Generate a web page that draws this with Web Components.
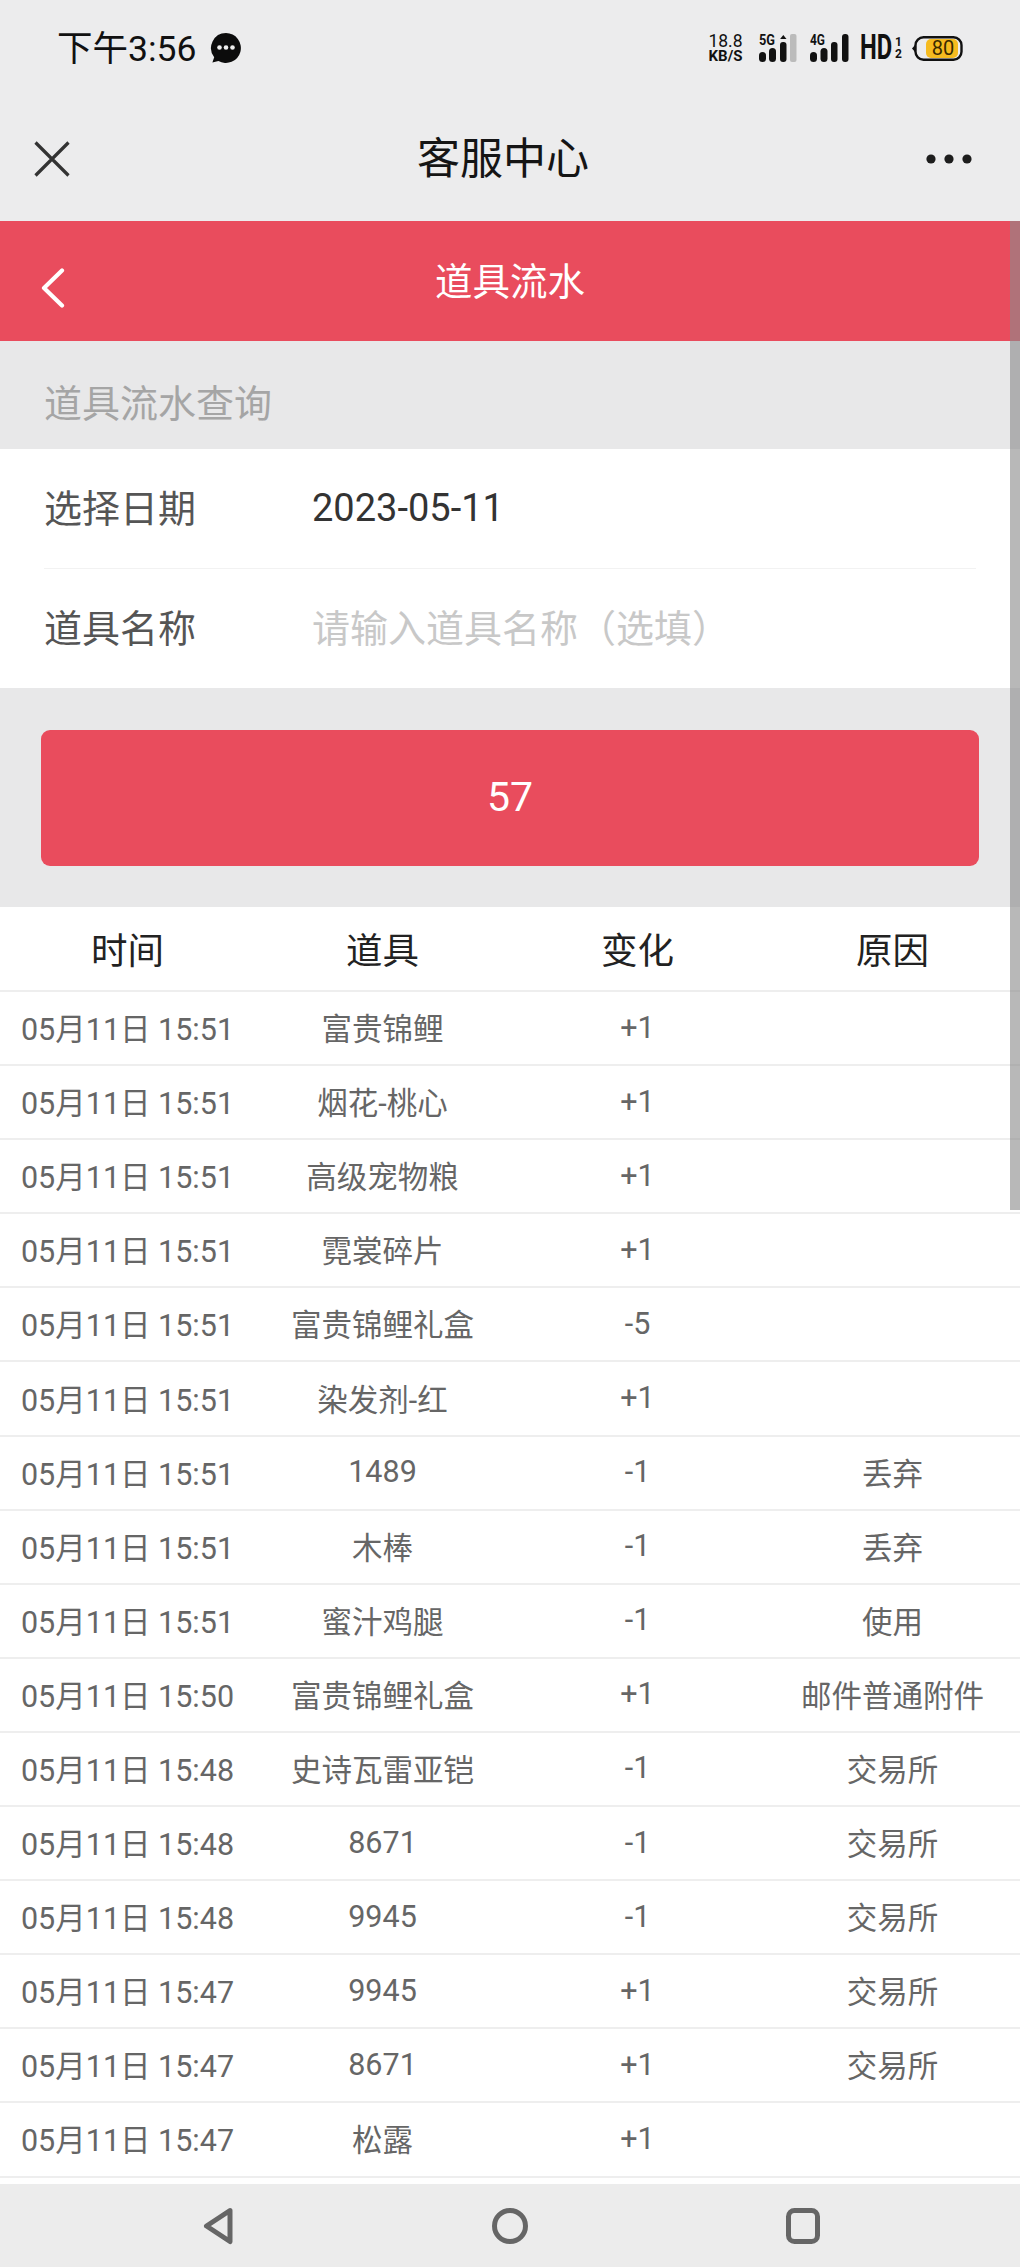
<!DOCTYPE html>
<html lang="zh">
<head>
<meta charset="utf-8">
<title>道具流水</title>
<style>
  html, body { margin: 0; padding: 0; background: #fff; }
  body { font-family: Roboto, 'Noto Sans CJK SC', sans-serif; }
</style>
</head>
<body>
<phone-page>
  <status-bar></status-bar>
  <title-bar>客服中心</title-bar>
  <red-header>道具流水</red-header>
  <section-title>道具流水查询</section-title>
  <form-card>
    <form-row label="选择日期">2023-05-11</form-row>
    <form-row label="道具名称" placeholder>请输入道具名称（选填）</form-row>
  </form-card>
  <submit-bar>57</submit-bar>
  <record-table></record-table>
  <nav-bar></nav-bar>
</phone-page>

<script>
const FONT = "Roboto, 'Noto Sans CJK SC', sans-serif";

const RECORDS = [
  ['05月11日 15:51', '富贵锦鲤', '+1', ''],
  ['05月11日 15:51', '烟花-桃心', '+1', ''],
  ['05月11日 15:51', '高级宠物粮', '+1', ''],
  ['05月11日 15:51', '霓裳碎片', '+1', ''],
  ['05月11日 15:51', '富贵锦鲤礼盒', '-5', ''],
  ['05月11日 15:51', '染发剂-红', '+1', ''],
  ['05月11日 15:51', '1489', '-1', '丢弃'],
  ['05月11日 15:51', '木棒', '-1', '丢弃'],
  ['05月11日 15:51', '蜜汁鸡腿', '-1', '使用'],
  ['05月11日 15:50', '富贵锦鲤礼盒', '+1', '邮件普通附件'],
  ['05月11日 15:48', '史诗瓦雷亚铠', '-1', '交易所'],
  ['05月11日 15:48', '8671', '-1', '交易所'],
  ['05月11日 15:48', '9945', '-1', '交易所'],
  ['05月11日 15:47', '9945', '+1', '交易所'],
  ['05月11日 15:47', '8671', '+1', '交易所'],
  ['05月11日 15:47', '松露', '+1', ''],
];

function define(name, html) {
  customElements.define(name, class extends HTMLElement {
    constructor() {
      super();
      this.attachShadow({ mode: 'open' }).innerHTML = html;
    }
  });
}

define('phone-page', `
  <style>
    :host {
      display: flex;
      flex-direction: column;
      position: relative;
      width: 1020px;
      height: 2267px;
      overflow: hidden;
      background: #fff;
      font-family: ${FONT};
    }
    .scrollbar {
      position: absolute;
      right: 0;
      top: 221px;
      width: 10px;
      height: 989px;
      background: rgba(139, 139, 139, 0.61);
    }
  </style>
  <slot></slot>
  <div class="scrollbar"></div>
`);

define('status-bar', `
  <style>
    :host {
      display: flex;
      align-items: center;
      justify-content: space-between;
      height: 96px;
      padding: 0 57px 0 57px;
      background: #ececed;
      color: #111;
    }
    .left, .right { display: flex; align-items: center; }
    .time { font-size: 35.500px; line-height: 40px; padding-top: 2px; }
    .bubble { margin-left: 14px; display: block; }
    .speed {
      display: flex;
      flex-direction: column;
      align-items: center;
      width: 37px;
      font-weight: 500;
    }
    .speed b { font-weight: 400; font-size: 17.500px; line-height: 16px; }
    .speed i { font-style: normal; font-weight: 700; font-size: 15px; line-height: 15px; }
    .sig { display: block; }
    .sig-a { margin-left: 15px; }
    .sig-b { margin-left: 11px; }
    .hd {
      display: inline-block;
      margin-left: 10px;
      width: 31px;
      font-size: 35px;
      line-height: 36px;
      font-weight: 700;
      transform: scaleX(0.68);
      transform-origin: left center;
      letter-spacing: 0;
      white-space: nowrap;
    }
    .sim {
      display: flex;
      flex-direction: column;
      align-items: center;
      margin-left: 3px;
      width: 9px;
      font-size: 12px;
      line-height: 12px;
      font-weight: 700;
    }
    .batt { position: relative; margin-left: 9px; width: 51px; height: 25px; }
    .batt svg { position: absolute; left: 0; top: 0; }
    .batt span {
      position: absolute;
      left: 11px;
      right: 0;
      top: 0;
      text-align: center;
      font-size: 20px;
      line-height: 25px;
      color: #3a2a00;
    }
  </style>
  <div class="left">
    <span class="time">下午3:56</span>
    <svg class="bubble" width="32" height="32" viewBox="0 0 32 32">
      <path d="M16 1a15 15 0 1 1-7.600 28l-6 1.600 1.800-5.400A15 15 0 0 1 16 1z" fill="#0c0c0c"/>
      <circle cx="9.500" cy="15.500" r="2.300" fill="#eee"/>
      <circle cx="16" cy="15.500" r="2.300" fill="#eee"/>
      <circle cx="22.500" cy="15.500" r="2.300" fill="#eee"/>
    </svg>
  </div>
  <div class="right">
    <div class="speed"><b>18.8</b><i>KB/S</i></div>
    <svg class="sig sig-a" width="40" height="30" viewBox="0 0 40 30">
      <text x="0" y="12" font-family="Roboto, sans-serif" font-size="14" font-weight="700" fill="#111" textLength="16" lengthAdjust="spacingAndGlyphs">5G</text>
      <rect x="0" y="19" width="7" height="10" rx="3.500" fill="#111"/>
      <rect x="10" y="15" width="7" height="14" rx="3.500" fill="#111"/>
      <rect x="21" y="9" width="6.500" height="20" rx="3" fill="#111"/>
      <path d="M24.300 2l3.200 4h-6.400z" fill="#111"/>
      <rect x="31" y="1" width="6.500" height="28" rx="2" fill="#bbb"/>
    </svg>
    <svg class="sig sig-b" width="40" height="30" viewBox="0 0 40 30">
      <text x="0" y="12" font-family="Roboto, sans-serif" font-size="14" font-weight="700" fill="#111" textLength="15" lengthAdjust="spacingAndGlyphs">4G</text>
      <rect x="0" y="19" width="7" height="10" rx="3.500" fill="#111"/>
      <rect x="10.500" y="15" width="7" height="14" rx="3.500" fill="#111"/>
      <rect x="21" y="9" width="6.500" height="20" rx="3" fill="#111"/>
      <rect x="32" y="1" width="6.500" height="28" rx="3" fill="#111"/>
    </svg>
    <span class="hd">HD</span>
    <div class="sim"><span>1</span><span>2</span></div>
    <div class="batt">
      <svg width="51" height="25" viewBox="0 0 51 25">
        <path d="M0 12.500l3-3.500v7z" fill="#111"/>
        <rect x="14" y="3" width="32" height="19" rx="5" fill="#f6bb1f"/>
        <rect x="3.500" y="1.200" width="46" height="22.600" rx="8" fill="none" stroke="#111" stroke-width="2.400"/>
      </svg>
      <span>80</span>
    </div>
  </div>
`);

define('title-bar', `
  <style>
    :host {
      display: flex;
      align-items: center;
      justify-content: space-between;
      height: 125px;
      padding: 0 48px 0 34px;
      background: #ececed;
      color: #151515;
      box-sizing: border-box;
    }
    svg { display: block; }
    .title { font-size: 43px; line-height: 50px; margin-right: -10px; }
  </style>
  <svg width="36" height="36" viewBox="0 0 36 36"><path d="M1.500 1.500l33 33M34.500 1.500l-33 33" stroke="#333" stroke-width="3.200" fill="none"/></svg>
  <div class="title"><slot></slot></div>
  <svg width="46" height="10" viewBox="0 0 46 10" fill="#1d1d1d"><circle cx="5" cy="5" r="4.600"/><circle cx="23" cy="5" r="4.600"/><circle cx="41" cy="5" r="4.600"/></svg>
`);

define('red-header', `
  <style>
    :host {
      display: flex;
      position: relative;
      align-items: center;
      justify-content: center;
      height: 120px;
      background: #e94c5d;
      color: #fff;
    }
    .back { position: absolute; left: 41px; top: 47px; display: block; }
    .title { font-size: 37.500px; line-height: 44px; margin-top: 2px; }
  </style>
  <svg class="back" width="24" height="40" viewBox="0 0 24 40"><path d="M21 2.500L3 20l18 17.500" fill="none" stroke="#fff" stroke-width="4.200" stroke-linecap="round" stroke-linejoin="round"/></svg>
  <div class="title"><slot></slot></div>
`);

define('section-title', `
  <style>
    :host {
      display: flex;
      align-items: center;
      box-sizing: border-box;
      height: 108px;
      padding: 11px 0 0 44px;
      background: #e8e8e9;
      color: #a5a5a5;
      font-size: 38px;
    }
  </style>
  <slot></slot>
`);

define('form-card', `
  <style>
    :host { display: block; background: #fff; }
  </style>
  <slot></slot>
`);

customElements.define('form-row', class extends HTMLElement {
  constructor() {
    super();
    const muted = this.hasAttribute('placeholder');
    this.attachShadow({ mode: 'open' }).innerHTML = `
      <style>
        :host {
          display: flex;
          align-items: center;
          box-sizing: border-box;
          height: 120px;
          margin: 0 44px;
          font-size: 38px;
          color: #555;
        }
        :host(:first-child) { border-bottom: 1px solid #f2f2f2; }
        :host(:last-child) { height: 119px; }
        .label { width: 268px; margin-top: -7px; }
        .value { color: ${muted ? '#c8c8c8' : '#333'}; font-size: 38px; margin-top: ${muted ? -7 : -1}px; }
      </style>
      <div class="label">${this.getAttribute('label')}</div>
      <div class="value"><slot></slot></div>
    `;
  }
});

define('submit-bar', `
  <style>
    :host {
      display: block;
      box-sizing: border-box;
      height: 219px;
      padding: 42px 41px 41px;
      background: #e8e8e9;
    }
    .btn {
      display: flex;
      align-items: center;
      justify-content: center;
      box-sizing: border-box;
      height: 136px;
      padding-bottom: 3px;
      border-radius: 9px;
      background: #e94c5d;
      color: #fff;
      font-size: 41px;
    }
  </style>
  <div class="btn"><slot></slot></div>
`);

customElements.define('record-table', class extends HTMLElement {
  constructor() {
    super();
    const cells = (row) => row.map((t) => `<div class="cell">${t}</div>`).join('');
    this.attachShadow({ mode: 'open' }).innerHTML = `
      <style>
        :host { display: block; flex: 1; background: #fff; }
        .row {
          display: grid;
          grid-template-columns: repeat(4, 1fr);
          align-items: center;
          box-sizing: border-box;
          height: 74.100px;
          padding-bottom: 2px;
          border-bottom: 2px solid #eeeeee;
          font-size: 30.500px;
          color: #666;
        }
        .head { height: 85px; padding-bottom: 0; font-size: 36.500px; color: #222; }
        .cell { text-align: center; white-space: nowrap; }
      </style>
      <div class="row head">${cells(['时间', '道具', '变化', '原因'])}</div>
      ${RECORDS.map((r) => `<div class="row">${cells(r)}</div>`).join('')}
    `;
  }
});

define('nav-bar', `
  <style>
    :host {
      display: flex;
      align-items: center;
      justify-content: space-between;
      box-sizing: border-box;
      height: 83px;
      padding: 0 200px 0 202px;
      background: #ececec;
    }
    svg { display: block; }
  </style>
  <svg width="32" height="38" viewBox="0 0 32 38"><path d="M28 3.500L4.500 19 28 34.500z" fill="none" stroke="#666" stroke-width="5" stroke-linejoin="round"/></svg>
  <svg width="36" height="38" viewBox="0 0 36 38"><circle cx="18" cy="19" r="15.500" fill="none" stroke="#666" stroke-width="5"/></svg>
  <svg width="34" height="36" viewBox="0 0 34 36"><rect x="2.500" y="2.500" width="29" height="31" rx="6" fill="none" stroke="#666" stroke-width="5"/></svg>
`);
</script>
</body>
</html>
